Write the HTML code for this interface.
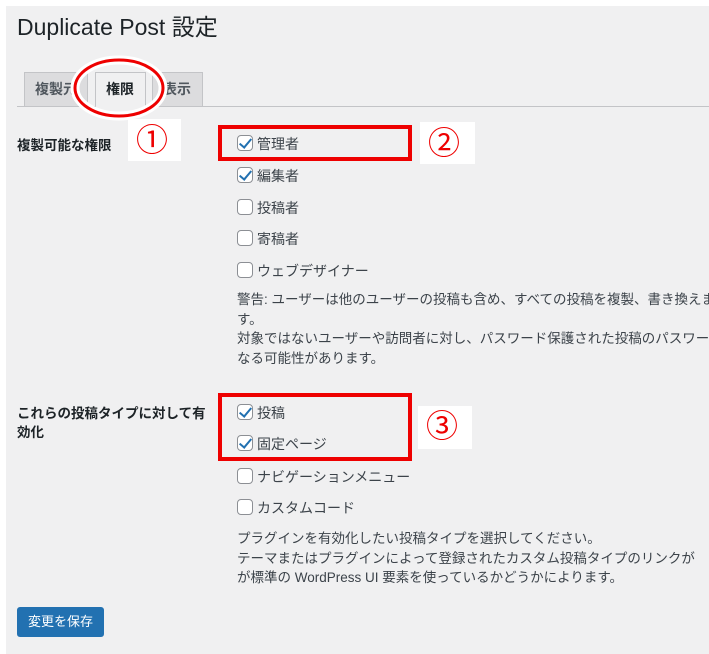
<!DOCTYPE html>
<html><head><meta charset="utf-8"><style>
*{margin:0;padding:0;box-sizing:border-box}
body{width:709px;height:654px;background:#fff;position:relative;overflow:hidden;font-family:"Liberation Sans","Noto Sans CJK JP",sans-serif;color:#3c434a;font-size:13px}
#g{position:absolute;left:6px;top:6px;right:0;bottom:0;background:#f0f0f1}
.a{position:absolute;white-space:nowrap}
h1{position:absolute;left:17px;top:8px;font-size:23px;font-weight:400;color:#1d2327}
.tab{position:absolute;top:72px;height:35px;border:1px solid #c3c4c7;background:#dcdcde;font-weight:700;font-size:14px;color:#50575e;padding:8px 10px;line-height:17px}
.line{position:absolute;left:17px;right:0;top:106px;height:1px;background:#c3c4c7}
.cb{position:absolute;width:16px;height:16px;border:1px solid #8c8f94;border-radius:4px;background:#fff}
.cb.c::after{content:"";position:absolute;left:4px;top:0px;width:5px;height:10px;border:solid #2271b1;border-width:0 2.5px 2.5px 0;transform:rotate(40deg)}
.lb{position:absolute;left:257px;font-size:14px;color:#3c434a}
.w{background:#fff;position:absolute}
.num{position:absolute;color:#e00;font-size:32px;line-height:32px}
.red{position:absolute;border:4px solid #e00}
.p{position:absolute;left:237px;font-size:13.5px;line-height:19.5px;white-space:nowrap}
</style></head><body><div id="g"></div>
<h1>Duplicate Post 設定</h1>
<div class="tab" style="left:24px;width:64px">複製元</div>
<div class="tab" style="left:95px;width:51px;background:#f0f0f1;border-bottom-color:#f0f0f1;height:36px;color:#1d2327">権限</div>
<div class="tab" style="left:152px;width:51px">表示</div>
<div class="line"></div>
<div class="line" style="left:96px;width:49px;background:#f0f0f1"></div>
<svg class="a" style="left:66px;top:54px" width="110" height="70"><ellipse cx="53" cy="34" rx="44" ry="28" fill="none" stroke="#fff" stroke-width="9"/><ellipse cx="53" cy="34" rx="44" ry="28" fill="none" stroke="#e00" stroke-width="3"/></svg>
<div class="a" style="left:17px;top:134px;font-weight:700;font-size:13.5px;color:#1d2327">複製可能な権限</div>
<div class="w" style="left:128px;top:119px;width:53px;height:42px"></div><div class="num" style="left:136px;top:124px">①</div>
<div class="w" style="left:420px;top:122px;width:55px;height:42px"></div><div class="num" style="left:428px;top:127px">②</div>
<div class="w" style="left:418px;top:406px;width:54px;height:43px"></div><div class="num" style="left:426px;top:410px">③</div>
<div class="cb c" style="left:237px;top:135px"></div><div class="lb" style="top:134px">管理者</div>
<div class="cb c" style="left:237px;top:167px"></div><div class="lb" style="top:166px">編集者</div>
<div class="cb" style="left:237px;top:199px"></div><div class="lb" style="top:198px">投稿者</div>
<div class="cb" style="left:237px;top:230px"></div><div class="lb" style="top:229px">寄稿者</div>
<div class="cb" style="left:237px;top:262px"></div><div class="lb" style="top:261px">ウェブデザイナー</div>
<div class="p" style="top:290px">警告: ユーザーは他のユーザーの投稿も含め、すべての投稿を複製、書き換えま<br>す。<br>対象ではないユーザーや訪問者に対し、パスワード保護された投稿のパスワー<br>なる可能性があります。</div>
<div class="red" style="left:218px;top:125px;width:194px;height:36px"></div>
<div class="a" style="left:17px;top:404px;font-weight:700;font-size:13.5px;color:#1d2327;line-height:19px">これらの投稿タイプに対して有<br>効化</div>
<div class="cb c" style="left:237px;top:404px"></div><div class="lb" style="top:403px">投稿</div>
<div class="cb c" style="left:237px;top:435px"></div><div class="lb" style="top:434px">固定ページ</div>
<div class="cb" style="left:237px;top:468px"></div><div class="lb" style="top:467px">ナビゲーションメニュー</div>
<div class="cb" style="left:237px;top:499px"></div><div class="lb" style="top:498px">カスタムコード</div>
<div class="p" style="top:529px">プラグインを有効化したい投稿タイプを選択してください。<br>テーマまたはプラグインによって登録されたカスタム投稿タイプのリンクが<br>が標準の WordPress UI 要素を使っているかどうかによります。</div>
<div class="red" style="left:218px;top:393px;width:194px;height:68px"></div>
<div class="a" style="left:17px;top:607px;width:87px;height:30px;background:#2271b1;border-radius:3px;color:#fff;font-size:13px;text-align:center;line-height:30px">変更を保存</div>
</body></html>
